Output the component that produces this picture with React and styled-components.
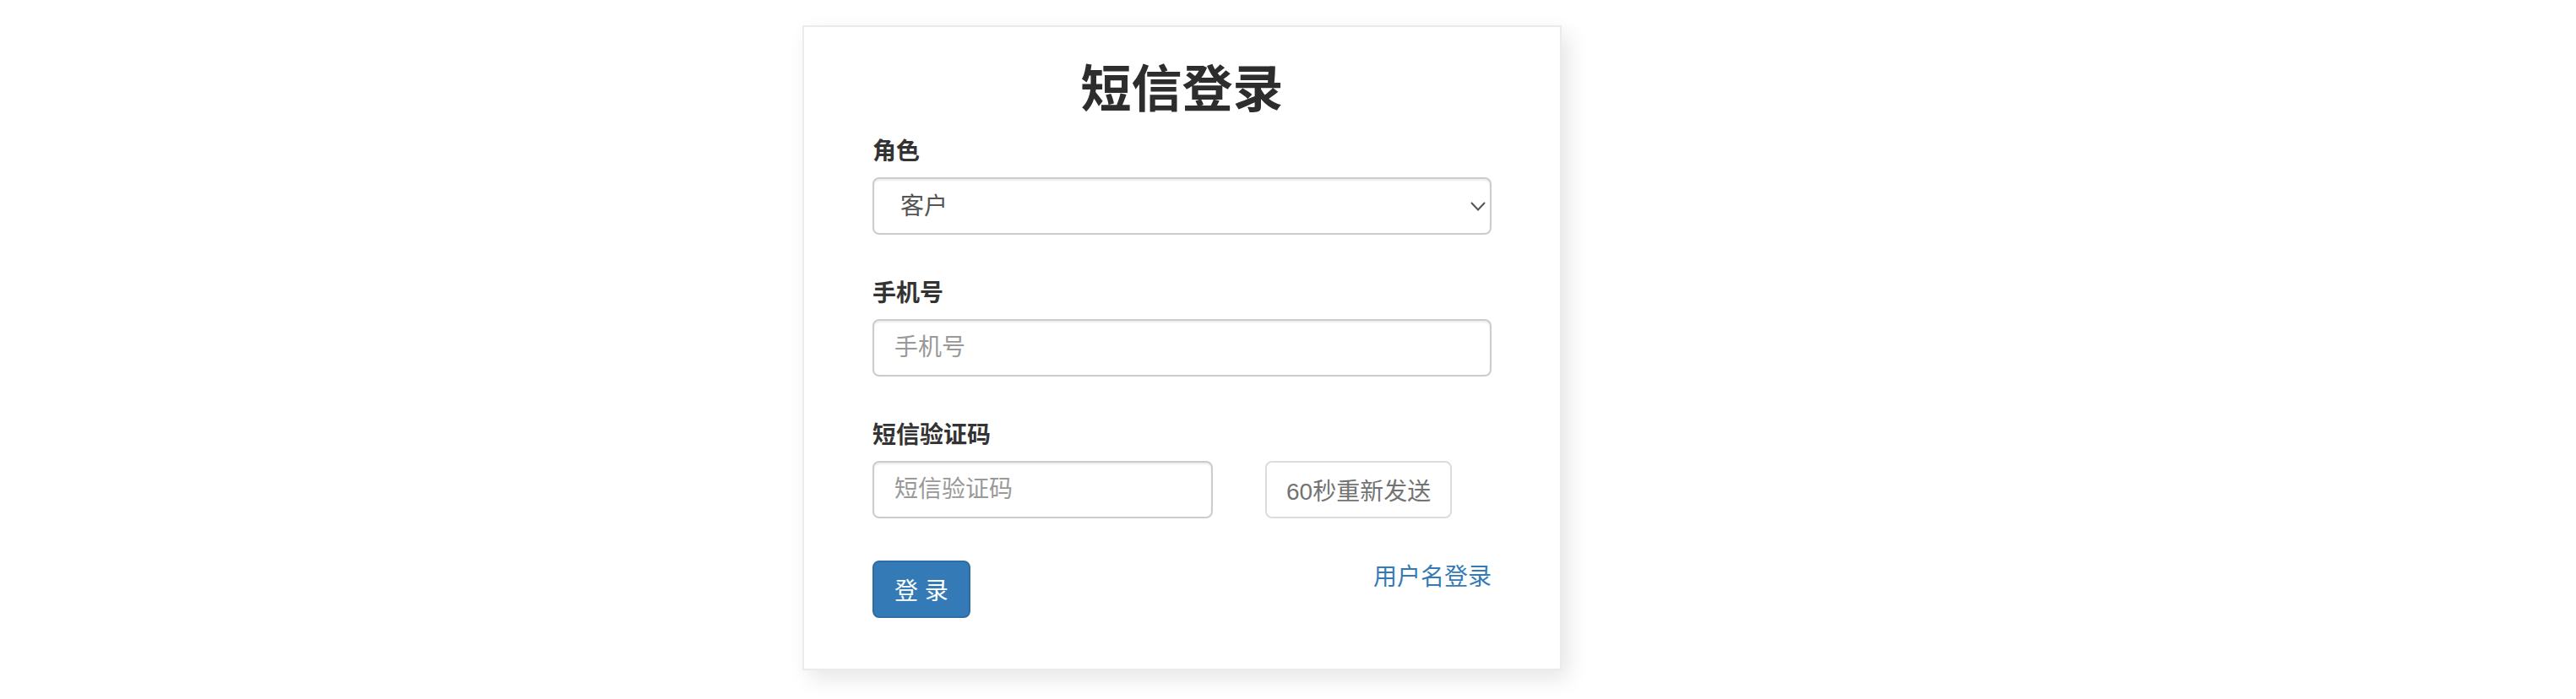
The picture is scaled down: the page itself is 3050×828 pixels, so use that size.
import React from 'react';
import styled, { createGlobalStyle } from 'styled-components';

const GlobalStyle = createGlobalStyle`
  body {
    margin: 0;
    background: #fff;
    font-family: "Liberation Sans", "Noto Sans CJK SC", sans-serif;
    color: #333;
  }
`;

const Page = styled.div`
  padding: 30px 0 40px 950px;
`;

const Card = styled.form`
  box-sizing: border-box;
  width: 899px;
  padding: 0 81px 60px 81px;
  background: #fff;
  border: 2px solid #ebebeb;
  box-shadow: 8px 10px 24px rgba(0, 0, 0, 0.1);
`;

const Title = styled.h2`
  margin: 42px 0 20px;
  font-size: 60px;
  line-height: 66px;
  font-weight: 700;
  text-align: center;
  color: #2d2d2d;
`;

const Group = styled.div`
  margin-bottom: 50px;
`;

const Label = styled.label`
  display: block;
  margin-bottom: 10px;
  font-size: 28px;
  line-height: 40px;
  font-weight: 700;
  color: #333;
`;

const controlBase = `
  box-sizing: border-box;
  display: block;
  height: 68px;
  border: 2px solid #ccc;
  border-radius: 8px;
  background: #fff;
  box-shadow: inset 0 2px 2px rgba(0, 0, 0, 0.075);
  font-family: "Liberation Sans", "Noto Sans CJK SC", sans-serif;
  font-size: 28px;
  color: #555;
  outline: none;
`;

const SelectWrap = styled.div`
  position: relative;
`;

const Select = styled.select`
  ${controlBase}
  width: 100%;
  padding: 0 50px 0 31px;
  appearance: none;
  -webkit-appearance: none;
`;

const Chevron = styled.svg`
  position: absolute;
  right: 7px;
  top: 29px;
  pointer-events: none;
`;

const Input = styled.input`
  ${controlBase}
  width: ${(p) => p.$width || '100%'};
  padding: 0 24px;

  &::placeholder {
    color: #999;
  }
`;

const CodeRow = styled.div`
  display: flex;
  align-items: center;
  gap: 62px;
`;

const SendButton = styled.button`
  box-sizing: border-box;
  height: 68px;
  padding: 0 23px;
  border: 2px solid #dcdcdc;
  border-radius: 8px;
  background: #fff;
  font-family: "Liberation Sans", "Noto Sans CJK SC", sans-serif;
  font-size: 28px;
  color: #737373;
  cursor: not-allowed;
`;

const Footer = styled.div`
  display: flex;
  justify-content: space-between;
  align-items: flex-start;
`;

const SubmitButton = styled.button`
  box-sizing: border-box;
  height: 68px;
  padding: 0 24px;
  border: 2px solid #2e6da4;
  border-radius: 8px;
  background: #337ab7;
  font-family: "Liberation Sans", "Noto Sans CJK SC", sans-serif;
  font-size: 28px;
  color: #fff;
  white-space: pre;
`;

const SwitchLink = styled.a`
  font-size: 28px;
  line-height: 40px;
  color: #337ab7;
  text-decoration: none;
`;

export default function App() {
  return (
    <>
      <GlobalStyle />
      <Page>
        <Card onSubmit={(e) => e.preventDefault()}>
          <Title>短信登录</Title>
          <Group>
            <Label>角色</Label>
            <SelectWrap>
              <Select defaultValue="customer">
                <option value="customer">客户</option>
              </Select>
              <Chevron width="18" height="11" viewBox="0 0 18 11">
                <path d="M1 1 L9 9.5 L17 1" fill="none" stroke="#555" strokeWidth="2" />
              </Chevron>
            </SelectWrap>
          </Group>
          <Group>
            <Label>手机号</Label>
            <Input type="text" placeholder="手机号" />
          </Group>
          <Group>
            <Label>短信验证码</Label>
            <CodeRow>
              <Input type="text" placeholder="短信验证码" $width="403px" />
              <SendButton type="button">60秒重新发送</SendButton>
            </CodeRow>
          </Group>
          <Footer>
            <SubmitButton type="submit">登 录</SubmitButton>
            <SwitchLink href="#">用户名登录</SwitchLink>
          </Footer>
        </Card>
      </Page>
    </>
  );
}
